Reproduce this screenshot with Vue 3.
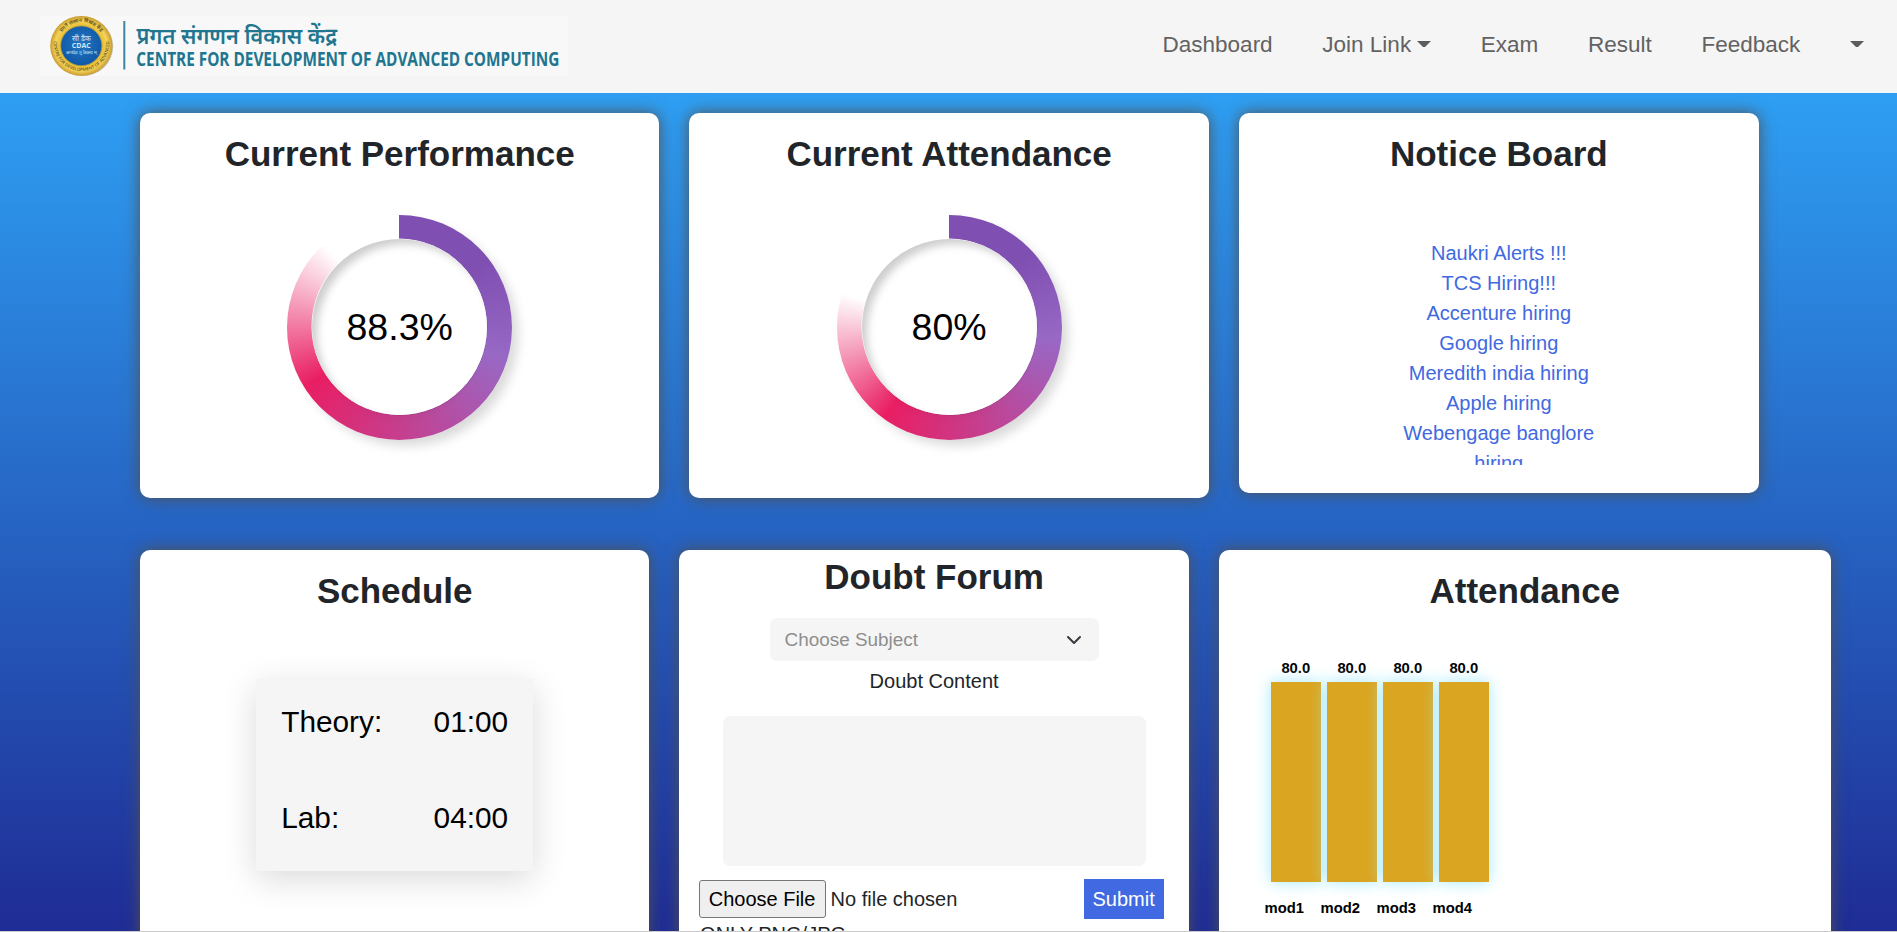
<script setup>
const notices = [
  'Naukri Alerts !!!',
  'TCS Hiring!!!',
  'Accenture hiring',
  'Google hiring',
  'Meredith india hiring',
  'Apple hiring',
  'Webengage banglore hiring',
]
const modules = [
  { name: 'mod1', value: '80.0' },
  { name: 'mod2', value: '80.0' },
  { name: 'mod3', value: '80.0' },
  { name: 'mod4', value: '80.0' },
]
const gauges = [
  { title: 'Current Performance', value: 88.3 },
  { title: 'Current Attendance', value: 80 },
]
function ring(value) {
  const end = value * 3.6
  return {
    background: `conic-gradient(#7f4fb2 0deg, #7f4fb2 ${end / 6}deg, #9868c5 ${end / 3}deg, #e91e63 ${end * 0.75}deg, #ffffff ${end}deg)`,
  }
}
</script>

<template>
  <div class="page">
    <header class="nav">
      <svg class="logo" width="528" height="60" viewBox="0 0 528 60">
        <defs>
          <radialGradient id="gold" cx="50%" cy="50%" r="50%">
            <stop offset="0.65" stop-color="#e9b92c" />
            <stop offset="0.84" stop-color="#f3d45c" />
            <stop offset="1" stop-color="#c99a2c" />
          </radialGradient>
          <radialGradient id="blue" cx="50%" cy="45%" r="55%">
            <stop offset="0" stop-color="#2277c4" />
            <stop offset="1" stop-color="#0f57a6" />
          </radialGradient>
          <path id="arcTop" d="M 17.5 30 A 24 24 0 0 1 65.5 30" />
          <path id="arcBottom" d="M 14 24 A 27.7 27.7 0 1 0 69 24" />
        </defs>
        <rect width="528" height="60" fill="#f7f8f7" />
        <ellipse cx="42.4" cy="30.6" rx="30.8" ry="29.4" fill="#a5977c" opacity="0.6" />
        <ellipse cx="41.3" cy="29.9" rx="31.1" ry="29.9" fill="url(#gold)" />
        <ellipse cx="41.3" cy="29.8" rx="20.6" ry="19.9" fill="url(#blue)" stroke="#a99a4c" stroke-width="0.8" />
        <text class="seal" font-size="5"><textPath href="#arcTop" startOffset="50%" text-anchor="middle">प्रगत संगणन विकास केंद्र</textPath></text>
        <text class="seal" font-size="4.4"><textPath href="#arcBottom" startOffset="50%" text-anchor="middle">CENTRE FOR DEVELOPMENT OF ADVANCED</textPath></text>
        <text class="core" x="41.3" y="25" font-size="7.5">सी डैक</text>
        <text class="core" x="41.3" y="32.2" font-size="7.5" font-weight="bold" textLength="19" lengthAdjust="spacingAndGlyphs">CDAC</text>
        <text class="core" x="41.3" y="38.2" font-size="4.4" textLength="31" lengthAdjust="spacingAndGlyphs">ज्ञानादेव तु कैवल्यम्</text>
        <rect x="83.3" y="5" width="2" height="48.5" fill="#3d86a3" />
        <text class="brand" x="96.6" y="27.5" font-size="23" textLength="200.5" lengthAdjust="spacingAndGlyphs">प्रगत संगणन विकास केंद्र</text>
        <text class="brand english" x="96.3" y="50" font-size="19.6" textLength="423" lengthAdjust="spacingAndGlyphs">CENTRE FOR DEVELOPMENT OF ADVANCED COMPUTING</text>
      </svg>
      <nav class="links">
        <a>Dashboard</a>
        <a>Join Link<i class="caret"></i></a>
        <a>Exam</a>
        <a>Result</a>
        <a>Feedback</a>
        <a class="user"><i class="caret"></i></a>
      </nav>
    </header>

    <main class="board">
      <section class="row">
        <article v-for="g in gauges" :key="g.title" class="card top">
          <h2>{{ g.title }}</h2>
          <div class="ring" :style="ring(g.value)">
            <div class="hole">{{ g.value }}%</div>
          </div>
        </article>
        <article class="card top notice">
          <h2>Notice Board</h2>
          <div class="ticker">
            <a v-for="n in notices" :key="n">{{ n }}</a>
          </div>
        </article>
      </section>

      <section class="row second">
        <article class="card schedule">
          <h2>Schedule</h2>
          <div class="times">
            <div><span>Theory:</span><span>01:00</span></div>
            <div><span>Lab:</span><span>04:00</span></div>
          </div>
        </article>

        <article class="card forum">
          <h2>Doubt Forum</h2>
          <div class="select">
            <span>Choose Subject</span>
            <svg width="16" height="16" viewBox="0 0 16 16"><path d="m2 5 6 6 6-6" fill="none" stroke="#343a40" stroke-width="2" stroke-linecap="round" stroke-linejoin="round" /></svg>
          </div>
          <label>Doubt Content</label>
          <div class="area"></div>
          <div class="actions">
            <button class="file">Choose File</button>
            <span class="none">No file chosen</span>
            <button class="submit">Submit</button>
          </div>
          <p>ONLY PNG/JPG</p>
        </article>

        <article class="card attendance">
          <h2>Attendance</h2>
          <div class="bars">
            <div v-for="m in modules" :key="m.name" class="col">
              <b>{{ m.value }}</b>
              <div class="bar"></div>
              <b class="name">{{ m.name }}</b>
            </div>
          </div>
        </article>
      </section>
    </main>
    <div class="edge"></div>
  </div>
</template>

<style>
body {
  overflow: hidden;
}
</style>

<style scoped>
* {
  box-sizing: border-box;
}
.page {
  width: 1897px;
  height: 932px;
  overflow: hidden;
  display: flex;
  flex-direction: column;
  font-family: 'Liberation Sans', Arial, sans-serif;
  color: #212529;
  font-size: 20px;
  line-height: 30px;
}
.nav {
  height: 93px;
  flex: none;
  background: #f5f5f5;
  display: flex;
  align-items: flex-start;
  justify-content: space-between;
  padding: 16px 33px 0 40px;
}
.logo {
  display: block;
}
.brand {
  font-family: 'Open Sans', 'Noto Sans', 'Noto Sans Devanagari', sans-serif;
  font-weight: 600;
  fill: #21758f;
}
.english {
  font-weight: 700;
}
.seal {
  font-family: 'Open Sans', sans-serif;
  font-weight: 600;
  fill: #6b5a1c;
}
.core {
  font-family: 'Open Sans', sans-serif;
  fill: #cfe6f7;
  text-anchor: middle;
}
.links {
  display: flex;
  gap: 49.7px;
  padding-top: 12px;
  font-size: 22.5px;
  line-height: 34px;
  color: #626262;
}
.links a {
  display: flex;
  align-items: center;
}
.caret {
  border: 6.75px solid transparent;
  border-top: 6.75px solid #5c5c5c;
  border-bottom: 0;
  margin: -3px 0 0 6px;
}
.user .caret {
  width: 14px;
  margin-left: 0;
}
.links a:nth-child(2) .caret {
  width: 14px;
}
.board {
  height: 838px;
  overflow: hidden;
  padding: 20px 66px 0 140px;
  background: linear-gradient(#2e9ff3, #1f2c95);
}
.row {
  display: flex;
  align-items: flex-start;
  gap: 30px;
  height: 437px;
}
.card {
  background: #fff;
  border-radius: 10px;
  box-shadow: 0 0 16px #505050;
  display: flex;
  flex-direction: column;
  align-items: center;
  flex: none;
}
h2 {
  margin: 20px 0 0;
  font-size: 35px;
  line-height: 42px;
  font-weight: bold;
}
.top {
  width: 519.4px;
  height: 385px;
}
.notice {
  width: 520px;
  height: 380px;
}
.ring {
  margin-top: 40px;
  width: 225px;
  height: 225px;
  border-radius: 50%;
  padding: 24px 25px;
  box-shadow: 7px 7px 11px -1px rgba(0, 0, 0, 0.15), -6px -6px 10px -1px rgba(255, 255, 255, 0.7);
}
.hole {
  width: 175px;
  height: 176px;
  border-radius: 50%;
  background: #fff;
  color: #000;
  font-size: 37.5px;
  line-height: 177px;
  text-align: center;
  box-shadow: inset 6px 6px 9px -1px rgba(0, 0, 0, 0.2), inset -4px -4px 6px -1px rgba(255, 255, 255, 0.7),
    -0.5px -0.5px 0 #fff, 0.5px 0.5px 0 rgba(0, 0, 0, 0.15), 0 12px 10px -10px rgba(0, 0, 0, 0.05);
}
.ticker {
  margin-top: 63px;
  width: 206px;
  height: 227px;
  overflow: hidden;
  text-align: center;
  color: #4169e1;
}
.ticker a {
  display: block;
}
.schedule,
.forum {
  width: 509.4px;
  height: 450px;
}
.times {
  margin-top: 67px;
  width: 277px;
  height: 192px;
  background: #f5f5f5;
  padding: 19px 25px 0;
  color: #000;
  font-size: 29.8px;
  line-height: 47px;
  box-shadow: 0 8px 32px rgba(0, 0, 0, 0.15);
}
.times div {
  display: flex;
  justify-content: space-between;
  height: 96px;
}
.forum h2 {
  margin-top: 6px;
}
.select {
  margin-top: 20px;
  width: 329px;
  height: 43px;
  border-radius: 7px;
  background: #f5f5f5;
  display: flex;
  align-items: center;
  justify-content: space-between;
  padding: 0 17px 0 15px;
  font-size: 18.9px;
  color: #8e8e8e;
}
label {
  margin-top: 5px;
}
.area {
  margin-top: 20px;
  width: 423px;
  height: 150px;
  border-radius: 7px;
  background: #f5f5f5;
}
.actions {
  margin-top: 13px;
  width: 465px;
  height: 40px;
  margin-left: -6px;
  display: flex;
  align-items: center;
}
button {
  font: inherit;
  padding: 0;
}
.file {
  width: 127px;
  height: 38px;
  border: 1px solid #767676;
  border-radius: 3px;
  background: #efefef;
  color: #000;
}
.none {
  margin-left: 5px;
  flex: 1;
}
.submit {
  width: 80px;
  height: 40px;
  border: 0;
  background: #4169e1;
  color: #fff;
}
.forum p {
  margin: 0;
  width: 468px;
}
.attendance {
  width: 612px;
  height: 450px;
}
.bars {
  margin-top: 44px;
  align-self: flex-start;
  padding-left: 52px;
  display: flex;
  gap: 6px;
  font-size: 14.8px;
  line-height: 24px;
  color: #000;
}
.col {
  width: 50px;
  display: flex;
  flex-direction: column;
  align-items: center;
}
.bar {
  margin-top: 2px;
  width: 50px;
  height: 200px;
  background: #daa520;
  box-shadow: 0 0 15px #a3e9fa;
}
.name {
  margin: 14px 23px 0 0;
}
.edge {
  height: 1px;
  background: #cbcbcb;
}
</style>
